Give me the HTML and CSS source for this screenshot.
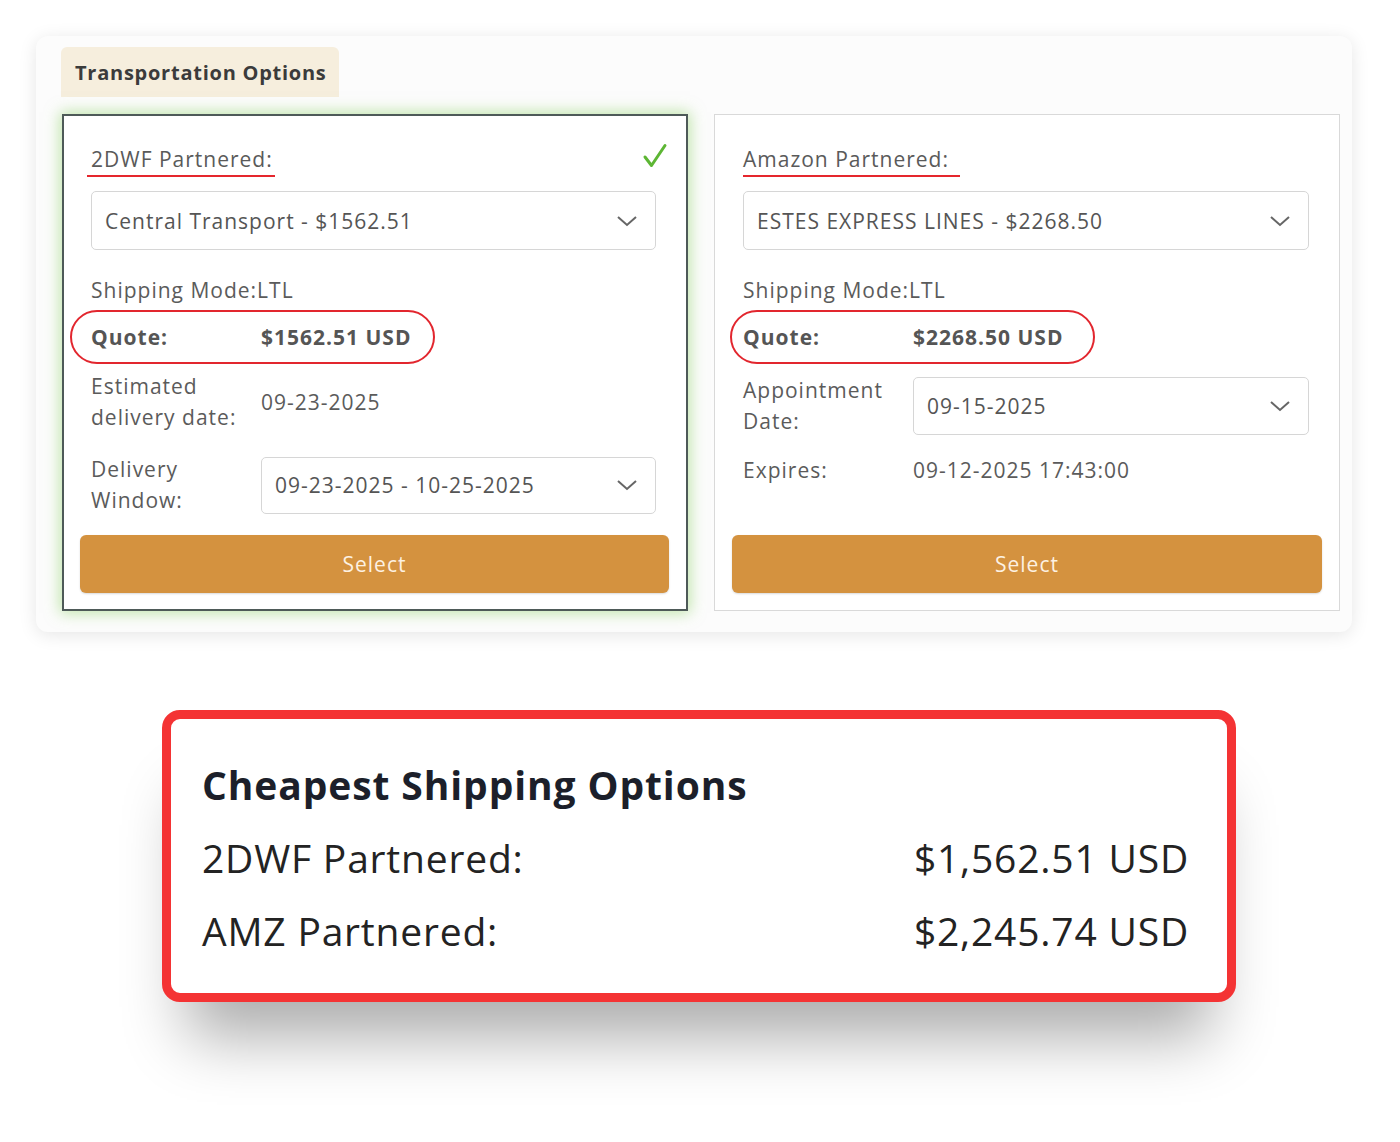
FILE: index.html
```html
<!DOCTYPE html>
<html>
<head>
<meta charset="utf-8">
<link rel="stylesheet" href="styles.css">
</head>
<body>
<div class="card">
  <div class="tab">Transportation Options</div>
  <div class="panels">
    <div class="panel selected">
      <div class="panel-head">
        <span class="title">2DWF Partnered:</span>
        <svg class="check" width="26" height="26" viewBox="0 0 26 26"><path d="M3 14 L9.5 22.5 L23 2.5" fill="none" stroke="#5db634" stroke-width="3" stroke-linecap="round" stroke-linejoin="round"/></svg>
      </div>
      <div class="select-box">
        <span>Central Transport - $1562.51</span>
        <svg class="chev" width="22" height="12" viewBox="0 0 22 12"><path d="M2 2 L11 10 L20 2" fill="none" stroke="#666" stroke-width="2"/></svg>
      </div>
      <div class="mode">Shipping Mode:LTL</div>
      <div class="quote quote-left"><span class="q-label">Quote:</span><span>$1562.51 USD</span></div>
      <div class="row est">
        <div class="label">Estimated delivery date:</div>
        <div class="value">09-23-2025</div>
      </div>
      <div class="row window">
        <div class="label">Delivery Window:</div>
        <div class="select-box small">
          <span>09-23-2025 - 10-25-2025</span>
          <svg class="chev" width="22" height="12" viewBox="0 0 22 12"><path d="M2 2 L11 10 L20 2" fill="none" stroke="#666" stroke-width="2"/></svg>
        </div>
      </div>
      <button class="btn">Select</button>
    </div>
    <div class="panel">
      <div class="panel-head">
        <span class="title title-amz">Amazon Partnered:</span>
      </div>
      <div class="select-box">
        <span>ESTES EXPRESS LINES - $2268.50</span>
        <svg class="chev" width="22" height="12" viewBox="0 0 22 12"><path d="M2 2 L11 10 L20 2" fill="none" stroke="#666" stroke-width="2"/></svg>
      </div>
      <div class="mode">Shipping Mode:LTL</div>
      <div class="quote quote-right"><span class="q-label">Quote:</span><span>$2268.50 USD</span></div>
      <div class="row appt">
        <div class="label">Appointment Date:</div>
        <div class="select-box small">
          <span>09-15-2025</span>
          <svg class="chev" width="22" height="12" viewBox="0 0 22 12"><path d="M2 2 L11 10 L20 2" fill="none" stroke="#666" stroke-width="2"/></svg>
        </div>
      </div>
      <div class="row expires">
        <div class="label">Expires:</div>
        <div class="value">09-12-2025 17:43:00</div>
      </div>
      <button class="btn">Select</button>
    </div>
  </div>
</div>

<div class="summary">
  <div class="sum-title">Cheapest Shipping Options</div>
  <div class="sum-row"><span>2DWF Partnered:</span><span>$1,562.51 USD</span></div>
  <div class="sum-row"><span>AMZ Partnered:</span><span>$2,245.74 USD</span></div>
</div>
</body>
</html>
```

FILE: styles.css
```css
* { box-sizing: border-box; }
html, body { margin: 0; padding: 0; background: #fff; }
body {
  font-family: "Open Sans", "Liberation Sans", sans-serif;
  color: #5b5b5b;
  width: 1400px;
  height: 1142px;
  overflow: hidden;
}

.card {
  margin: 36px 0 0 36px;
  width: 1316px;
  height: 596px;
  background: #fcfcfc;
  border-radius: 12px;
  box-shadow: 0 3px 18px rgba(0,0,0,0.10);
  padding: 11px 12px 21px 26px;
}

.tab {
  margin-left: -1px;
  width: 278px;
  height: 50px;
  background: #f6eedd;
  border-radius: 6px 6px 0 0;
  font-weight: 700;
  font-size: 20px;
  color: #3b3b3b;
  padding-left: 14px;
  line-height: 52px;
  letter-spacing: 0.75px;
}

.panels {
  margin-top: 17px;
  display: grid;
  grid-template-columns: 626px 626px;
  column-gap: 26px;
  height: 497px;
}

.panel {
  background: #fff;
  border: 1px solid #d9d9d9;
  padding: 0 30px 17px 28px;
  display: flex;
  flex-direction: column;
  font-size: 21px;
  letter-spacing: 1px;
}
.panel.selected {
  border: 2px solid #4e5a58;
  padding-left: 27px;
  padding-bottom: 16px;
  box-shadow: 0 0 14px 2px rgba(140, 210, 100, 0.55);
}

.panel-head {
  padding-top: 28px;
  display: flex;
  justify-content: space-between;
  align-items: flex-start;
  height: 62px;
}
.selected .panel-head { padding-top: 27px; }
.title {
  line-height: 32px;
  margin-left: -4px;
  padding: 0 2px 0 4px;
  border-bottom: 2px solid #e5262d;
  color: #5a5a5a;
}
.title-amz {
  margin-left: 0;
  padding: 0 11px 0 0;
}
.check { margin-top: 0; margin-right: -12px; }

.select-box {
  margin-top: 14px;
  height: 59px;
  border: 1px solid #d6d6d6;
  border-radius: 5px;
  display: flex;
  align-items: center;
  justify-content: space-between;
  padding: 0 17px 0 13px;
  color: #555;
}
.selected .select-box { margin-top: 13px; }
.selected .select-box.small, .select-box.small {
  margin-top: 0;
  flex: 1;
  height: 57px;
}
.chev { flex: none; }

.mode {
  margin-top: 25px;
  line-height: 30px;
}

.quote {
  margin-top: 5px;
  width: 365px;
  height: 54px;
  border: 2px solid #e2262e;
  border-radius: 27px;
  display: flex;
  align-items: center;
  font-weight: 700;
  color: #555;
}
.quote-left { margin-left: -21px; padding-left: 19px; }
.quote-right { margin-left: -13px; padding-left: 11px; }
.q-label { width: 170px; flex: none; }

.row {
  display: flex;
  align-items: center;
}
.label {
  width: 170px;
  flex: none;
  line-height: 31px;
  padding-right: 10px;
}
.est { margin-top: 7px; }
.window { margin-top: 21px; }
.appt { margin-top: 11px; }
.appt .select-box { height: 58px; }
.expires { margin-top: 18px; }
.expires .label, .expires .value { line-height: 30px; }

.btn {
  margin: auto -13px 0 -11px;
  height: 58px;
  border: none;
  border-radius: 6px;
  background: #d4923f;
  color: #fdf1e2;
  font-family: "Open Sans", "Liberation Sans", sans-serif;
  font-size: 21px;
  letter-spacing: 1px;
  box-shadow: 0 1px 2px rgba(0,0,0,0.15);
}

.summary {
  margin: 78px 0 0 162px;
  width: 1074px;
  height: 292px;
  border: 9px solid #f43334;
  border-radius: 18px;
  background: #fff;
  box-shadow: 0 60px 60px -25px rgba(0,0,0,0.33);
  padding: 40px 38px 0 31px;
  color: #232323;
}
.sum-title {
  font-weight: 700;
  font-size: 39px;
  color: #1c1f2a;
  line-height: 52px;
  letter-spacing: 0.9px;
}
.sum-row {
  display: flex;
  justify-content: space-between;
  font-size: 39px;
  line-height: 52px;
  margin-top: 21px;
  letter-spacing: 0.8px;
}
```
